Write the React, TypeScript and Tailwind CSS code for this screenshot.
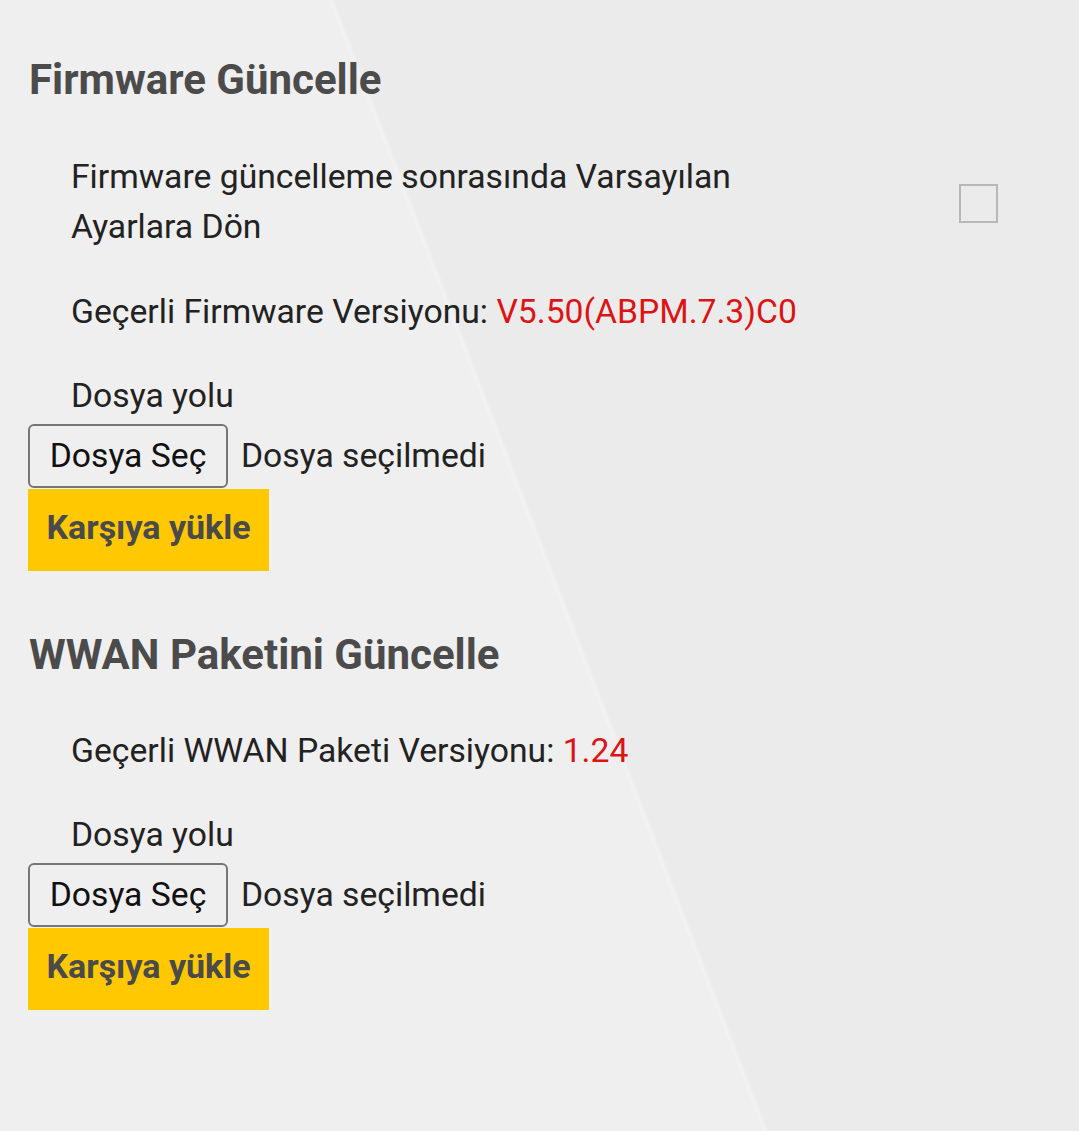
import React from 'react';

const FileRow = () => (
  <div className="flex flex-col items-start">
    <div className="flex items-center">
      <button className="w-[200px] h-[64px] border-2 border-[#767676] rounded-[6px] bg-[#efefef] text-[33.7px] text-[#111]">
        Dosya Seç
      </button>
      <span className="ml-[13px] text-[33.7px] text-[#222]">Dosya seçilmedi</span>
    </div>
    <button className="mt-px w-[241px] h-[82px] pb-[5px] bg-[#ffc800] text-[34px] font-bold text-[#4a4a4a]">
      Karşıya yükle
    </button>
  </div>
);

export default function App() {
  return <div className="min-h-screen bg-[linear-gradient(69deg,#efefef_50.35%,#f2f2f2_50.55%,#ebebeb_50.85%)] font-['Roboto',sans-serif] pt-[55px] pl-[28px]">
      <h2 className="pl-px leading-[50px] text-[42px] font-bold text-[#4b4b4b]">
        Firmware Güncelle
      </h2>
      <div className="mt-[47px] flex items-center justify-between pl-[43px] pr-[81px]">
        <p className="w-[700px] leading-[50px] text-[33.7px] text-[#222]">
          Firmware güncelleme sonrasında Varsayılan Ayarlara Dön
        </p>
        <div className="w-[39px] h-[39px] mt-[2px] border-2 border-[#b8b8b8] bg-[#ebebeb]" />
      </div>
      <p className="mt-[35px] pl-[43px] leading-[50px] text-[33.7px] text-[#222]">
        Geçerli Firmware Versiyonu: <span className="text-[#dc1414]">V5.50(ABPM.7.3)C0</span>
      </p>
      <p className="mt-[34px] pl-[43px] leading-[50px] text-[33.7px] text-[#222]">Dosya yolu</p>
      <div className="mt-[3px]">
        <FileRow />
      </div>

      <h2 className="mt-[59px] pl-px leading-[50px] text-[42px] font-bold text-[#4b4b4b]">
        WWAN Paketini Güncelle
      </h2>
      <p className="mt-[46px] pl-[43px] leading-[50px] text-[33.7px] text-[#222]">
        Geçerli WWAN Paketi Versiyonu: <span className="text-[#dc1414]">1.24</span>
      </p>
      <p className="mt-[34px] pl-[43px] leading-[50px] text-[33.7px] text-[#222]">Dosya yolu</p>
      <div className="mt-[3px]">
        <FileRow />
      </div>
    </div>;
}
